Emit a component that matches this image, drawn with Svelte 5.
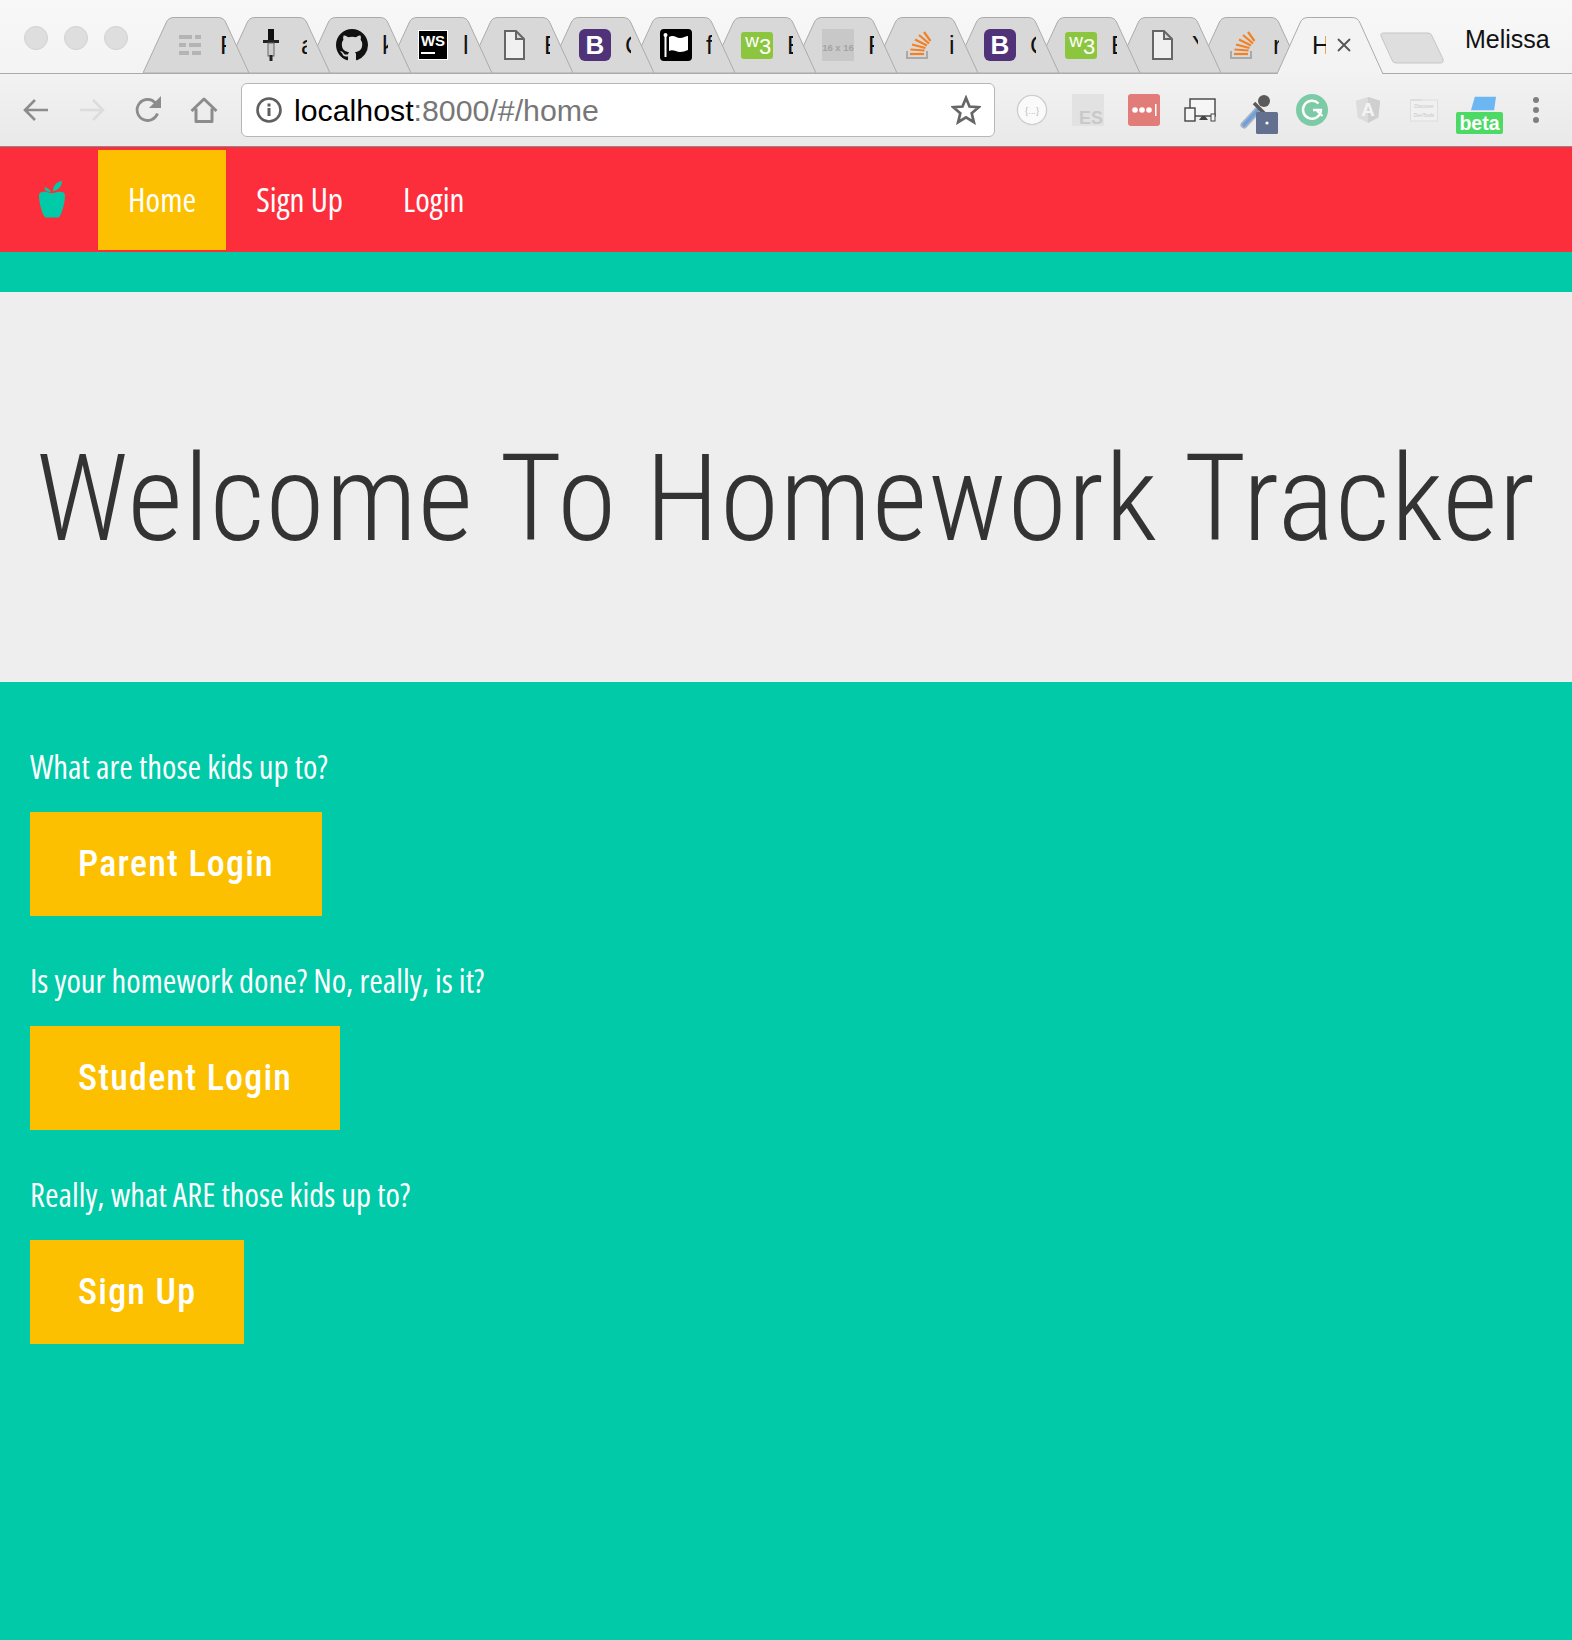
<script lang="ts">
  const TABS = [
    { icon: "lines", text: "P" },
    { icon: "dropper", text: "a" },
    { icon: "github", text: "k" },
    { icon: "ws", text: "l" },
    { icon: "doc", text: "E" },
    { icon: "bootstrap", text: "C" },
    { icon: "flag", text: "f" },
    { icon: "w3", text: "E" },
    { icon: "placeholder", text: "F" },
    { icon: "stack", text: "i" },
    { icon: "bootstrap", text: "C" },
    { icon: "w3", text: "E" },
    { icon: "doc", text: "Y" },
    { icon: "stack", text: "r" },
  ];

  const SECTIONS = [
    { prompt: "What are those kids up to?", action: "Parent Login" },
    { prompt: "Is your homework done? No, really, is it?", action: "Student Login" },
    { prompt: "Really, what ARE those kids up to?", action: "Sign Up" },
  ];

  const LINKS = ["Home", "Sign Up", "Login"];
</script>

{#snippet favicon(icon)}
  <svg class="favicon" viewBox="0 0 32 32" aria-hidden="true">
    {#if icon === "lines"}
      <g fill="#b4b4b4">
        <rect x="5" y="6" width="13" height="4" /><rect x="21" y="6" width="6" height="4" />
        <rect x="5" y="14" width="7" height="4" /><rect x="15" y="14" width="12" height="4" />
        <rect x="5" y="22" width="10" height="4" /><rect x="18" y="22" width="9" height="4" />
      </g>
    {:else if icon === "dropper"}
      <rect x="13" y="0" width="6" height="12" fill="#111" />
      <rect x="8" y="11" width="16" height="3" fill="#222" />
      <rect x="13" y="14" width="6" height="13" fill="#ccc" stroke="#666" />
      <rect x="14.500" y="26" width="3" height="6" fill="#222" />
    {:else if icon === "github"}
      <path fill="#111" transform="scale(2)" d="M8 0C3.58 0 0 3.58 0 8c0 3.54 2.29 6.53 5.47 7.59.4.07.55-.17.55-.38 0-.19-.01-.82-.01-1.49-2.01.37-2.53-.49-2.69-.94-.09-.23-.48-.94-.82-1.13-.28-.15-.68-.52-.01-.53.63-.01 1.08.58 1.23.82.72 1.21 1.87.87 2.33.66.07-.52.28-.87.51-1.07-1.78-.2-3.64-.89-3.64-3.95 0-.87.31-1.59.82-2.15-.08-.2-.36-1.02.08-2.12 0 0 .67-.21 2.2.82.64-.18 1.32-.27 2-.27.68 0 1.36.09 2 .27 1.53-1.04 2.2-.82 2.2-.82.44 1.1.16 1.92.08 2.12.51.56.82 1.27.82 2.15 0 3.07-1.87 3.75-3.65 3.95.29.25.54.73.54 1.48 0 1.07-.01 1.93-.01 2.2 0 .21.15.46.55.38A8.013 8.013 0 0016 8c0-4.42-3.58-8-8-8z" />
    {:else if icon === "ws"}
      <rect x="1.500" y="1.500" width="29" height="29" fill="#000" stroke="#fff" />
      <text x="16" y="17" class="fav-ws">WS</text>
      <rect x="4" y="23" width="14" height="2" fill="#fff" />
    {:else if icon === "doc"}
      <path d="M7 2h11l8 8v20H7z M18 2v8h8" fill="#f0f0f0" stroke="#666" stroke-width="2" />
    {:else if icon === "bootstrap"}
      <rect width="32" height="32" rx="6" fill="#4f3277" />
      <text x="16" y="25" class="fav-b">B</text>
    {:else if icon === "flag"}
      <rect width="32" height="32" rx="4" fill="#000" />
      <path d="M9 8c5-3 7 1 11 1 3 0 6-2 8-2v14c-3 1-5 2-8 2-4 0-7-3-11-1z" fill="#fff" />
      <rect x="4.500" y="6" width="2" height="22" fill="#fff" /><circle cx="5.500" cy="6" r="2" fill="#fff" />
    {:else if icon === "w3"}
      <rect y="3" width="32" height="27" rx="3" fill="#8cc63f" />
      <text x="11" y="18" class="fav-w">w</text>
      <text x="24" y="25" class="fav-3">3</text>
    {:else if icon === "placeholder"}
      <rect width="32" height="32" fill="#c8c8c8" />
      <text x="16" y="22" class="fav-ph">16 x 16</text>
    {:else if icon === "stack"}
      <path d="M4 22v7h20v-7" fill="none" stroke="#a9a9a9" stroke-width="2" />
      <g stroke="#f48024" stroke-width="2.200">
        <path d="M7 25h14" /><path d="M7.500 20.500l14 1" /><path d="M9 15.500l13.500 3.500" />
        <path d="M12 10.500l12 6" /><path d="M16 6l10 8.500" /><path d="M21 3l6.500 9" />
      </g>
    {/if}
  </svg>
{/snippet}

<div class="browser">
  <header class="titlebar">
    <div class="lights"><i></i><i></i><i></i></div>
    <div class="tabs">
      {#each TABS as tab, i}
        <div class="tab" style="z-index: {30 - i}">
          <svg class="tab-shape" viewBox="0 0 106 57" aria-hidden="true">
            <path d="M0 56L23 6Q25 .5 31 .5H75Q81 .5 83 6L106 56Z" fill="#d8d8d8" stroke="#ababab" />
          </svg>
          {@render favicon(tab.icon)}
          <span class="tab-title">{tab.text}</span>
        </div>
      {/each}
      <div class="tab tab--active">
        <svg class="tab-shape" viewBox="0 0 106 57" aria-hidden="true">
          <path d="M0 57L23 6Q25 .5 31 .5H75Q81 .5 83 6L106 57" fill="#f3f3f3" stroke="#ababab" />
        </svg>
        <span class="tab-title tab-title--active">H</span>
        <svg class="tab-close" viewBox="0 0 14 14" aria-hidden="true">
          <path d="M1 1l12 12M13 1L1 13" stroke="#555" stroke-width="1.800" />
        </svg>
      </div>
    </div>
    <svg class="newtab" viewBox="0 0 64 32" aria-hidden="true">
      <path d="M1 4Q0 1 4 1H48Q51 1 52 4L63 27Q64 31 60 31H16Q13 31 12 28Z" fill="#dedede" stroke="#c6c6c6" />
    </svg>
    <span class="profile">Melissa</span>
  </header>

  <div class="toolbar">
    <div class="slot">
      <svg viewBox="0 0 28 28" class="tool"><path d="M26 14H4M13 4L3 14l10 10" fill="none" stroke="#8c8c8c" stroke-width="2.600" /></svg>
    </div>
    <div class="slot">
      <svg viewBox="0 0 28 28" class="tool"><path d="M2 14h22M15 4l10 10-10 10" fill="none" stroke="#dcdcdc" stroke-width="2.600" /></svg>
    </div>
    <div class="slot">
      <svg viewBox="0 0 28 28" class="tool"><path d="M23.500 17.500A10.500 10.500 0 1 1 21 6.500l3.500 3" fill="none" stroke="#8c8c8c" stroke-width="2.800" /><path d="M27 0v12H15z" fill="#8c8c8c" /></svg>
    </div>
    <div class="slot">
      <svg viewBox="0 0 28 28" class="tool"><path d="M1.500 15L14 3l12.500 12M6 12.500V25.500h16V12.500" fill="none" stroke="#8c8c8c" stroke-width="3" stroke-linejoin="round" /></svg>
    </div>

    <div class="omnibox">
      <svg viewBox="0 0 28 28" class="info">
        <circle cx="14" cy="14" r="11.500" fill="none" stroke="#5f5f5f" stroke-width="2.600" />
        <rect x="12.500" y="12" width="3" height="8" fill="#5f5f5f" /><rect x="12.500" y="7.500" width="3" height="3" fill="#5f5f5f" />
      </svg>
      <span class="url"><b>localhost</b>:8000/#/home</span>
      <svg viewBox="0 0 30 30" class="star"><path d="M15 3l3.500 8.500 9.200.7-7 6 2.200 9-7.900-4.900-7.900 4.900 2.200-9-7-6 9.200-.7z" fill="none" stroke="#666" stroke-width="2.700" /></svg>
    </div>

    <div class="extensions">
      <div class="slot">
        <svg viewBox="0 0 34 34" class="ext"><circle cx="17" cy="17" r="15.500" fill="#fafafa" stroke="#cfcfcf" stroke-width="1.500" /><text x="17" y="21" class="ext-json">{"{...}"}</text></svg>
      </div>
      <div class="slot">
        <svg viewBox="0 0 32 32" class="ext"><rect width="32" height="32" fill="#e2e2e2" /><text x="19" y="30" class="ext-es">ES</text></svg>
      </div>
      <div class="slot">
        <svg viewBox="0 0 32 32" class="ext"><rect width="32" height="32" rx="3" fill="#e27c78" /><g fill="#fff"><circle cx="7" cy="16" r="2.800" /><circle cx="14" cy="16" r="2.800" /><circle cx="21" cy="16" r="2.800" /><rect x="27" y="10" width="1.500" height="12" /></g></svg>
      </div>
      <div class="slot">
        <svg viewBox="0 0 32 24" class="ext ext--devices"><rect x="6" y="1" width="25" height="17" fill="#f6f6f6" stroke="#444" stroke-width="1.400" /><rect x="1" y="10" width="10" height="13" fill="#f6f6f6" stroke="#444" stroke-width="1.400" /><path d="M15 22h9l-3-4h-3z" fill="#444" /><rect x="27" y="16" width="4" height="7" fill="#f6f6f6" stroke="#444" /></svg>
      </div>
      <div class="slot">
        <svg viewBox="0 0 40 40" class="ext ext--dropper">
          <path d="M19 16L5 31" stroke="#a9b4c2" stroke-width="7" stroke-linecap="round" />
          <path d="M19 16L5 31" stroke="#6f9fdc" stroke-width="3.500" stroke-linecap="round" />
          <path d="M15 9l11 11" stroke="#5a5a5a" stroke-width="3.500" />
          <circle cx="25" cy="7" r="6" fill="#5a5a5a" />
          <rect x="17" y="18" width="22" height="22" rx="1.500" fill="#63708f" /><circle cx="28" cy="29" r="1.600" fill="#fff" />
        </svg>
      </div>
      <div class="slot">
        <svg viewBox="0 0 32 32" class="ext"><circle cx="16" cy="16" r="16" fill="#7dcba6" /><path d="M22.500 9.500A9 9 0 1 0 25 16h-8" fill="none" stroke="#fff" stroke-width="2.400" /><path d="M21 17l5.500 5" stroke="#fff" stroke-width="2" /></svg>
      </div>
      <div class="slot">
        <svg viewBox="0 0 28 30" class="ext ext--angular"><path d="M14 1L1 5l2 18 11 6 11-6 2-18z" fill="#dcdcdc" /><path d="M14 1v28l11-6 2-18z" fill="#cfcfcf" /><text x="14" y="21" class="ext-ng">A</text></svg>
      </div>
      <div class="slot">
        <svg viewBox="0 0 28 24" class="ext ext--angular"><rect x=".5" y="2" width="27" height="21" fill="#f0f0f0" stroke="#dedede" /><path d="M1 1h10l2 2H1z" fill="#dedede" /><text x="14" y="10" class="ext-disc">Discover</text><text x="14" y="19" class="ext-disc">DevTools</text></svg>
      </div>
      <div class="slot">
        <div class="beta">
          <svg viewBox="0 0 26 14" class="beta-folder"><path d="M4 0H26L24 14H0z" fill="#6cb6f2" /></svg>
          <span>beta</span>
        </div>
      </div>
      <div class="slot">
        <div class="dots"><i></i><i></i><i></i></div>
      </div>
    </div>
  </div>

  <nav class="navbar">
    <a class="brand" href="#/home" aria-label="Home">
      <svg viewBox="0 0 28 38" class="apple" aria-hidden="true">
        <path fill="#00caa7" d="M1 14C1 11 5 10 9 11c2 .5 3.500 1.200 5 1.200s3-.7 5-1.200c4-1 8 0 8 3 0 6-2 15-4.500 20-.8 2-2 2.500-3.500 2.500H9C7.500 36.500 6.300 36 5.500 34 3 29 1 20 1 14z" />
        <path fill="#00caa7" d="M15 10C15 5 18 1 24 0c0 5-3 9-9 10zM13 11C11 7 8 6 6 6.500c1 3 3 4.500 7 4.500z" />
      </svg>
    </a>
    {#each LINKS as link, i}
      <a class="nav-link" class:active={i === 0} href="#/home">{link}</a>
    {/each}
  </nav>

  <div class="spacer"></div>

  <section class="jumbotron">
    <h1>Welcome To Homework Tracker</h1>
  </section>

  <main class="content">
    {#each SECTIONS as section}
      <p>{section.prompt}</p>
      <button>{section.action}</button>
    {/each}
  </main>
</div>

<style>
  :global(body) {
    margin: 0;
    background: #00caa7;
  }

  .browser {
    height: 1640px;
    overflow: hidden;
    background: #00caa7;
    display: flex;
    flex-direction: column;
    font-family: "Liberation Sans", sans-serif;
  }

  .titlebar {
    box-sizing: border-box;
    height: 74px;
    flex: none;
    display: flex;
    align-items: flex-end;
    background: linear-gradient(#f8f8f8, #f3f3f3);
    border-bottom: 1px solid #ababab;
  }

  .lights {
    align-self: flex-start;
    display: flex;
    gap: 16px;
    margin: 26px 15px 0 24px;
  }

  .lights i {
    box-sizing: border-box;
    width: 24px;
    height: 24px;
    border-radius: 50%;
    background: #dedede;
    border: 1px solid #d2d2d2;
  }

  .tabs {
    display: flex;
    margin-bottom: -1px;
  }

  .tab {
    position: relative;
    flex: none;
    box-sizing: border-box;
    width: 106px;
    height: 57px;
    margin-right: -25px;
    padding-left: 31px;
    display: flex;
    align-items: center;
  }

  .tab--active {
    z-index: 40;
    margin-right: 0;
    padding-left: 35px;
  }

  .tab-shape {
    position: absolute;
    inset: 0;
    width: 106px;
    height: 57px;
  }

  .favicon {
    position: relative;
    width: 32px;
    height: 32px;
    flex: none;
    margin-top: -1px;
  }

  .tab-title {
    position: relative;
    width: 6px;
    margin-left: 14px;
    overflow: hidden;
    font-size: 25px;
    line-height: 28px;
    color: #111;
    margin-top: -1px;
  }

  .tab-title--active {
    margin-left: 0;
    width: 14px;
  }

  .tab-close {
    position: relative;
    width: 14px;
    height: 14px;
    margin-left: 11px;
    margin-top: -1px;
  }

  .fav-ws { font: 700 15px "Liberation Sans", sans-serif; fill: #fff; text-anchor: middle; }
  .fav-b { font: 700 26px "Liberation Sans", sans-serif; fill: #fff; text-anchor: middle; }
  .fav-w { font: 400 19px "Liberation Sans", sans-serif; fill: #fff; text-anchor: middle; }
  .fav-3 { font: 400 22px "Liberation Sans", sans-serif; fill: #fff; text-anchor: middle; }
  .fav-ph { font: 700 9.500px "Liberation Sans", sans-serif; fill: #a4a4a4; text-anchor: middle; }
  .ext-json { font: 10px "Liberation Sans", sans-serif; fill: #bdbdbd; text-anchor: middle; }
  .ext-es { font: 700 18px "Liberation Sans", sans-serif; fill: #c9c9c9; text-anchor: middle; }
  .ext-ng { font: 700 20px "Liberation Sans", sans-serif; fill: #f4f4f4; text-anchor: middle; }
  .ext-disc { font: 5px "Liberation Sans", sans-serif; fill: #c6c6c6; text-anchor: middle; }

  .newtab {
    width: 64px;
    height: 32px;
    flex: none;
    margin: 0 0 9px -3px;
  }

  .profile {
    align-self: flex-start;
    margin: 25px 0 0 21px;
    font-size: 25px;
    line-height: 28px;
    color: #111;
  }

  .toolbar {
    box-sizing: border-box;
    height: 73px;
    flex: none;
    display: flex;
    align-items: center;
    padding: 0 8px;
    background: linear-gradient(#f2f2f2, #e9e9e9);
    border-bottom: 1px solid #8a8a8a;
  }

  .slot {
    width: 56px;
    flex: none;
    display: flex;
    justify-content: center;
    align-items: center;
  }

  .tool {
    width: 28px;
    height: 28px;
  }

  .omnibox {
    box-sizing: border-box;
    flex: 1;
    margin: -1px 9px 0;
    height: 54px;
    display: flex;
    align-items: center;
    padding: 0 13px;
    background: #fff;
    border: 1px solid #b7b7b7;
    border-radius: 6px;
  }

  .info {
    width: 28px;
    height: 28px;
    flex: none;
  }

  .url {
    flex: 1;
    margin-left: 11px;
    padding-top: 2px;
    font-size: 30.300px;
    color: #777;
  }

  .url b {
    font-weight: 400;
    color: #000;
  }

  .star {
    width: 30px;
    height: 30px;
    flex: none;
  }

  .extensions {
    display: flex;
    flex: none;
  }

  .ext {
    width: 32px;
    height: 32px;
  }

  .ext--devices { width: 32px; height: 24px; }
  .ext--angular { width: 28px; height: 28px; }
  .ext--dropper { width: 40px; height: 40px; margin-top: 8px; margin-left: 6px; }

  .beta {
    position: relative;
    width: 48px;
    height: 38px;
    margin-top: 10px;
  }

  .beta-folder {
    position: absolute;
    top: 0;
    left: 15px;
    width: 25px;
    height: 15px;
  }

  .beta span {
    position: absolute;
    left: 0;
    bottom: 0;
    width: 47px;
    height: 22px;
    background: #4cd964;
    border-radius: 2px;
    color: #fff;
    font-size: 19.500px;
    font-weight: 700;
    line-height: 22px;
    text-align: center;
  }

  .dots {
    display: flex;
    flex-direction: column;
    gap: 4px;
  }

  .dots i {
    width: 6px;
    height: 6px;
    border-radius: 50%;
    background: #7f7f7f;
  }

  .navbar {
    box-sizing: border-box;
    height: 105px;
    flex: none;
    display: flex;
    padding: 3px 0 2px;
    background: #fd2e3c;
  }

  .brand {
    width: 98px;
    flex: none;
    display: flex;
    align-items: center;
    padding-left: 38px;
    box-sizing: border-box;
  }

  .apple {
    width: 28px;
    height: 38px;
  }

  .nav-link {
    padding: 0 30px;
    font-family: "Open Sans", sans-serif;
    font-stretch: 75%;
    font-weight: 400;
    font-size: 33.200px;
    line-height: 100px;
    color: #fff;
    text-decoration: none;
  }

  .nav-link.active {
    background: #fcc000;
  }

  .spacer {
    height: 40px;
    flex: none;
  }

  .jumbotron {
    height: 390px;
    flex: none;
    display: flex;
    align-items: center;
    justify-content: center;
    background: #eee;
  }

  h1 {
    margin: 23px 0 0;
    font-family: Roboto, sans-serif;
    font-stretch: 75%;
    font-weight: 350;
    font-size: 120px;
    letter-spacing: 1px;
    color: #333;
    white-space: nowrap;
  }

  .content {
    padding: 60px 30px 0;
    display: flex;
    flex-direction: column;
    align-items: flex-start;
  }

  p {
    margin: 0 0 20px;
    font-family: "Open Sans", sans-serif;
    font-stretch: 75%;
    font-weight: 400;
    font-size: 32.800px;
    line-height: 50px;
    color: #fff;
  }

  button {
    border: 0;
    padding: 0 48px;
    height: 104px;
    margin-bottom: 40px;
    background: #fcc000;
    color: #fff;
    font-family: Roboto, sans-serif;
    font-stretch: 75%;
    font-weight: 500;
    font-size: 36px;
    letter-spacing: 1.200px;
  }
</style>
